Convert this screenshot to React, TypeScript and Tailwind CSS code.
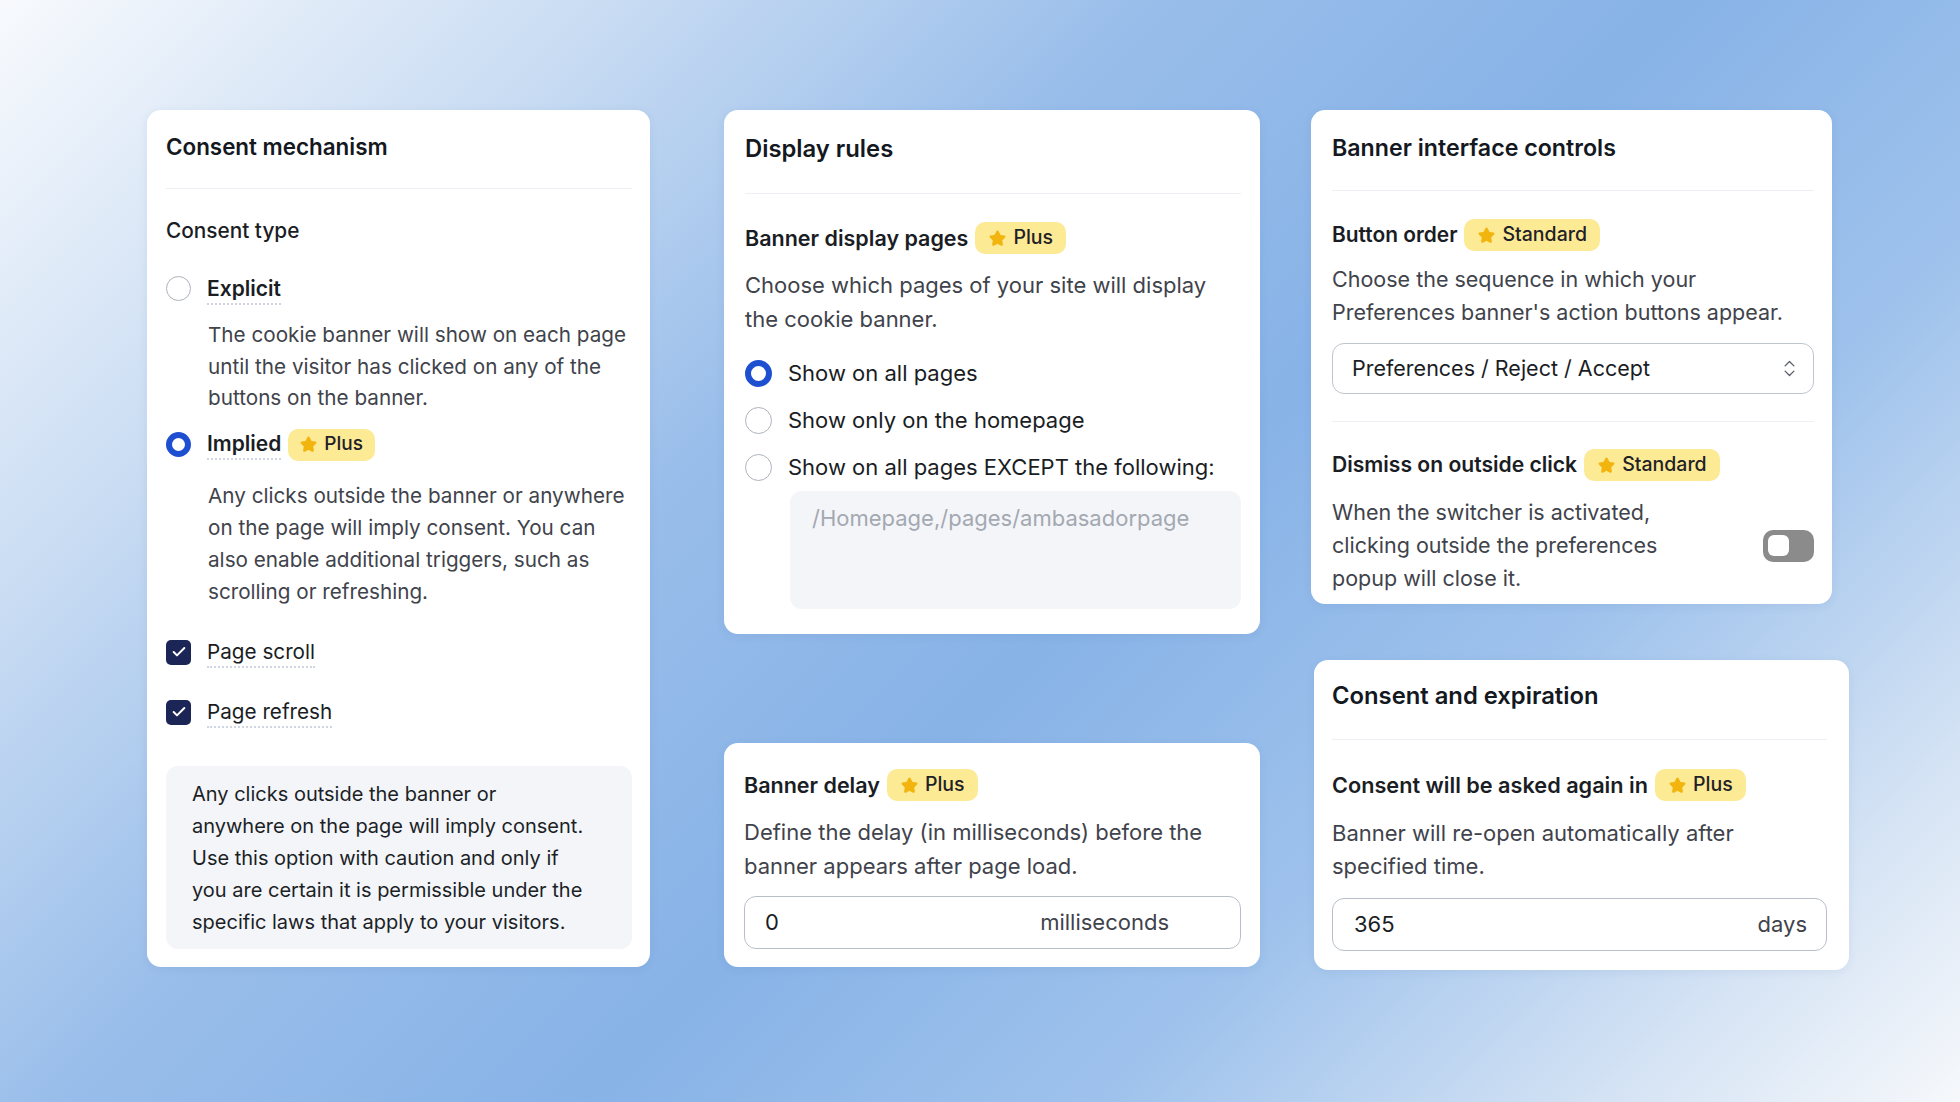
import { Check, ChevronsUpDown, Star } from 'lucide-react'
import type { ReactNode } from 'react'

const font = { fontFamily: 'Inter, "Noto Sans", sans-serif' }

function Badge({ label, small }: { label: string; small?: boolean }) {
  return (
    <span
      className={`inline-flex h-[32px] items-center rounded-[10px] bg-[#fdea94] font-medium text-[#1f2128] ${
        small ? 'gap-[7px] pl-[12px] pr-[12px] text-[19px]' : 'gap-[7px] pl-[14px] pr-[13px] text-[19.5px]'
      }`}
    >
      <Star size={17} className="fill-[#f2b50f] text-[#f2b50f]" strokeWidth={2.5} strokeLinejoin="round" />
      {label}
    </span>
  )
}

function Radio({ checked, size = 26 }: { checked?: boolean; size?: number }) {
  return (
    <span
      className={`block shrink-0 rounded-full bg-white ${
        checked ? 'border-[6.5px] border-[#1f4fd1]' : 'border-[1.5px] border-[#adb2bb]'
      } ${size === 27 ? 'h-[27px] w-[27px]' : 'h-[25px] w-[25px]'}`}
    />
  )
}

function Checkbox() {
  return (
    <span className="flex h-[25px] w-[25px] shrink-0 items-center justify-center rounded-[5px] bg-[#1b2656]">
      <Check size={16} strokeWidth={3} className="text-white" />
    </span>
  )
}

function Dotted({ children, className = '' }: { children: ReactNode; className?: string }) {
  return (
    <span className={`border-b-2 border-dotted border-[#cfd6e2] leading-[28px] ${className}`}>{children}</span>
  )
}

function Card({ className = '', children }: { className?: string; children: ReactNode }) {
  return (
    <div className={`rounded-[14px] bg-white shadow-[0_2px_10px_rgba(40,80,140,0.08)] ${className}`}>{children}</div>
  )
}

function Divider({ className = '' }: { className?: string }) {
  return <div className={`h-px bg-[#eceff3] ${className}`} />
}

export default function App() {
  return (
    <div
      style={font}
      className="flex h-[1102px] w-[1960px] items-start overflow-hidden bg-[linear-gradient(135deg,#f8fafd_0%,#c9dcf3_20%,#98bdea_38%,#88b3e7_55%,#9ec2ec_72%,#d3e2f4_88%,#f6f8fb_100%)] pl-[147px] pt-[110px]"
    >
      {/* Consent mechanism */}
      <Card className="w-[503px] pb-[18px] pl-[19px] pr-[18px] pt-[23px]">
        <h2 className="text-[22.4px] font-semibold leading-[28px] text-[#14181f]">Consent mechanism</h2>
        <Divider className="mt-[27px]" />
        <div className="mt-[28px] text-[20.8px] font-medium leading-[28px] text-[#1a1d24]">Consent type</div>

        <div className="mt-[30px] flex items-start gap-[16px]">
          <span className="mt-[1px]">
            <Radio />
          </span>
          <Dotted className="text-[21px] font-semibold text-[#1a1d24]">Explicit</Dotted>
        </div>
        <p className="ml-[42px] mt-[14px] text-[20.7px] leading-[31.5px] text-[#3f434b]">
          The cookie banner will show on each page until the visitor has clicked on any of the buttons on the banner.
        </p>

        <div className="mt-[15px] flex h-[32px] items-center gap-[16px]">
          <Radio checked />
          <Dotted className="text-[21px] font-semibold text-[#1a1d24]">Implied</Dotted>
          <span className="-ml-[9px]">
            <Badge label="Plus" small />
          </span>
        </div>
        <p className="ml-[42px] mt-[19px] text-[20.7px] leading-[32px] text-[#3f434b]">
          Any clicks outside the banner or anywhere on the page will imply consent. You can also enable additional
          triggers, such as scrolling or refreshing.
        </p>

        <div className="mt-[30px] flex items-start gap-[16px]">
          <span className="mt-[2px]">
            <Checkbox />
          </span>
          <Dotted className="text-[20.7px] text-[#1a1d24]">Page scroll</Dotted>
        </div>
        <div className="mt-[30px] flex items-start gap-[16px]">
          <span className="mt-[2px]">
            <Checkbox />
          </span>
          <Dotted className="text-[20.7px] text-[#1a1d24]">Page refresh</Dotted>
        </div>

        <div className="mt-[38px] rounded-[12px] bg-[#f3f5f9] pb-[11px] pl-[26px] pr-[20px] pt-[12px] text-[20px] leading-[32px] text-[#1c1f26]">
          Any clicks outside the banner or
          <br />
          anywhere on the page will imply consent.
          <br />
          Use this option with caution and only if
          <br />
          you are certain it is permissible under the
          <br />
          specific laws that apply to your visitors.
        </div>
      </Card>

      {/* Middle column */}
      <div className="ml-[74px] flex w-[536px] flex-col">
        <Card className="pb-[25px] pl-[21px] pr-[19px] pt-[25px]">
          <h2 className="text-[23.8px] font-semibold leading-[28px] text-[#14181f]">Display rules</h2>
          <Divider className="mt-[30px]" />
          <div className="mt-[28px] flex h-[32px] items-center gap-[7px]">
            <span className="text-[21.5px] font-semibold text-[#1a1d24]">Banner display pages</span>
            <Badge label="Plus" />
          </div>
          <p className="mt-[14px] text-[22px] leading-[34px] text-[#3f434b]">
            Choose which pages of your site will display the cookie banner.
          </p>
          <div className="mt-[23px] flex flex-col gap-[19px]">
            {[
              { label: 'Show on all pages', checked: true },
              { label: 'Show only on the homepage', checked: false },
              { label: 'Show on all pages EXCEPT the following:', checked: false },
            ].map((option) => (
              <div key={option.label} className="flex h-[28px] items-center gap-[16px]">
                <Radio checked={option.checked} size={27} />
                <span className="whitespace-nowrap text-[22px] text-[#1a1d24]">{option.label}</span>
              </div>
            ))}
          </div>
          <textarea
            readOnly
            placeholder="/Homepage,/pages/ambasadorpage"
            className="ml-[45px] mt-[10px] block h-[118px] w-[451px] resize-none rounded-[12px] bg-[#f3f5f9] px-[22px] pt-[13px] text-[22px] leading-[28px] outline-none placeholder:text-[#a3a8b1]"
          />
        </Card>

        <Card className="mt-[109px] pb-[18px] pl-[20px] pr-[19px] pt-[26px]">
          <div className="flex h-[32px] items-center gap-[7px]">
            <span className="text-[21.5px] font-semibold text-[#1a1d24]">Banner delay</span>
            <Badge label="Plus" />
          </div>
          <p className="mt-[14px] text-[22px] leading-[34px] text-[#3f434b]">
            Define the delay (in milliseconds) before the banner appears after page load.
          </p>
          <div className="mt-[13px] flex h-[53px] items-center justify-between rounded-[12px] border border-[#b9bfc9] pl-[20px] pr-[71px] text-[22px]">
            <span className="text-[#1a1d24]">0</span>
            <span className="text-[#3f434b]">milliseconds</span>
          </div>
        </Card>
      </div>

      {/* Right column */}
      <div className="ml-[51px] flex w-[538px] flex-col">
        <Card className="w-[521px] pb-[9px] pl-[21px] pr-[18px] pt-[24px]">
          <h2 className="text-[23.2px] font-semibold leading-[28px] text-[#14181f]">Banner interface controls</h2>
          <Divider className="mt-[28px]" />
          <div className="mt-[28px] flex h-[32px] items-center gap-[7px]">
            <span className="text-[20.9px] font-semibold text-[#1a1d24]">Button order</span>
            <Badge label="Standard" />
          </div>
          <p className="mt-[12px] text-[21.5px] leading-[33px] text-[#3f434b]">
            Choose the sequence in which your Preferences banner's action buttons appear.
          </p>
          <div className="mt-[14px] flex h-[51px] items-center justify-between rounded-[12px] border border-[#bfc5cf] pl-[19px] pr-[13px]">
            <span className="text-[21.5px] text-[#1a1d24]">Preferences / Reject / Accept</span>
            <ChevronsUpDown size={21} strokeWidth={1.6} className="text-[#5d626b]" />
          </div>
          <Divider className="mt-[27px]" />
          <div className="mt-[27px] flex h-[32px] items-center gap-[7px]">
            <span className="text-[21.1px] font-semibold text-[#1a1d24]">Dismiss on outside click</span>
            <Badge label="Standard" />
          </div>
          <div className="mt-[15px] flex items-center justify-between">
            <p className="w-[345px] text-[21.5px] leading-[33px] text-[#3f434b]">
              When the switcher is activated, clicking outside the preferences popup will close it.
            </p>
            <span className="flex h-[32px] w-[51px] items-center rounded-[10px] bg-[#8b8b8b] pl-[5px]">
              <span className="h-[21px] w-[21px] rounded-[6px] bg-white" />
            </span>
          </div>
        </Card>

        <Card className="ml-[3px] mt-[56px] w-[535px] pb-[19px] pl-[18px] pr-[22px] pt-[22px]">
          <h2 className="text-[23.8px] font-semibold leading-[28px] text-[#14181f]">Consent and expiration</h2>
          <Divider className="mt-[29px]" />
          <div className="mt-[29px] flex h-[32px] items-center gap-[7px]">
            <span className="text-[21.7px] font-semibold text-[#1a1d24]">Consent will be asked again in</span>
            <Badge label="Plus" />
          </div>
          <p className="mt-[16px] max-w-[440px] text-[22px] leading-[33px] text-[#3f434b]">
            Banner will re-open automatically after specified time.
          </p>
          <div className="mt-[15px] flex h-[53px] items-center justify-between rounded-[12px] border border-[#b9bfc9] pl-[21px] pr-[19px] text-[22px]">
            <span className="text-[#1a1d24]">365</span>
            <span className="text-[#3f434b]">days</span>
          </div>
        </Card>
      </div>
    </div>
  )
}
